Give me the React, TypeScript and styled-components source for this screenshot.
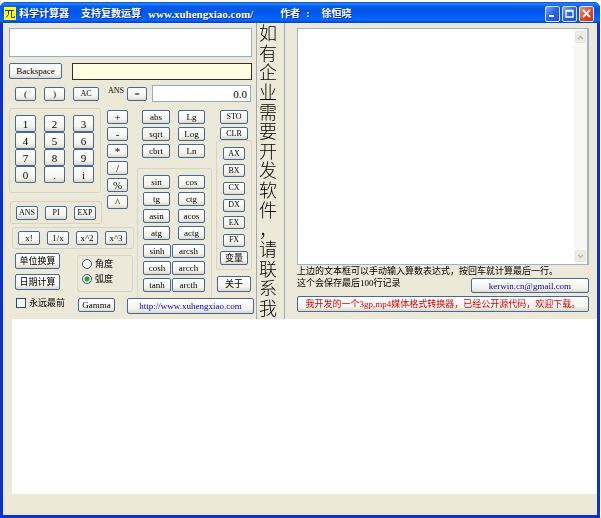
import React from "react";
import styled, { createGlobalStyle, css } from "styled-components";

const GlobalStyle = createGlobalStyle`
  * { box-sizing: border-box; }
  body { margin: 0; background: #fff; }
  button, input, textarea { font: inherit; color: inherit; margin: 0; }
  body, #root { font-family: "Liberation Serif", "Noto Sans CJK SC", serif; font-size: 9px; line-height: 12px; color: #000; }
`;

const Page = styled.div`
  min-height: 100vh;
  display: flex;
  padding: 2px 1px 0 0;
`;

const Window = styled.main`
  flex: 1;
  display: flex;
  flex-direction: column;
  background: #0a3fdc;
  border: 0 solid #0831d9;
  border-width: 0 3px 3px;
  border-radius: 6px 6px 0 0;
`;

const TitleBar = styled.header`
  height: 21px;
  display: flex;
  align-items: center;
  margin: 0 -3px;
  padding: 2px 6px 0 4px;
  border-radius: 6px 6px 0 0;
  color: #fff;
  background: linear-gradient(#0c50cc 0, #2a86fa 2px, #0560ee 4px, #0054e3 9px, #005cf5 13px, #0868ff 18px, #0042c8 21px);
`;

const Title = styled.h1`
  flex: 1;
  margin: 0 0 0 3px;
  display: flex;
  font-size: 10px;
  line-height: 14px;
  font-weight: 700;
  white-space: pre;
  text-shadow: 1px 1px #00309c;
`;

const TitlePart = styled.span<{ $gap?: number; $large?: boolean }>`
  margin-left: ${(p) => p.$gap ?? 0}px;
  font-size: ${(p) => (p.$large ? 11 : 10)}px;
`;

const Captions = styled.div`
  display: flex;
  gap: 2px;
`;

const CaptionButton = styled.button<{ $close?: boolean }>`
  width: 15px;
  height: 16px;
  padding: 0;
  display: grid;
  place-items: center;
  border: 1px solid #d5e2fb;
  border-radius: 2px;
  background: ${(p) =>
    p.$close
      ? "linear-gradient(135deg, #f0907c, #dc4a24 55%, #c83410)"
      : "linear-gradient(135deg, #7ba5f5, #2c62e4 50%, #1e56dc)"};
`;

const Client = styled.div`
  flex: 1;
  display: flex;
  flex-direction: column;
  background: #ece9d8;
  padding-bottom: 21px;
`;

const Panels = styled.div`
  display: flex;
  height: 296px;
`;

const Calculator = styled.section`
  width: 253px;
  flex: none;
  padding: 5px 2px 0 6px;
`;

const Row = styled.div<{ $gap?: number; $top?: number; $indent?: number; $height?: number }>`
  display: flex;
  align-items: ${(p) => (p.$height ? "center" : "flex-start")};
  gap: ${(p) => p.$gap ?? 0}px;
  margin-top: ${(p) => p.$top ?? 0}px;
  padding-left: ${(p) => p.$indent ?? 0}px;
  height: ${(p) => (p.$height ? `${p.$height}px` : "auto")};
`;

const Column = styled.div<{ $gap?: number; $width?: number; $top?: number; $center?: boolean }>`
  display: flex;
  flex-direction: column;
  align-items: ${(p) => (p.$center ? "center" : "flex-start")};
  gap: ${(p) => p.$gap ?? 0}px;
  width: ${(p) => (p.$width ? `${p.$width}px` : "auto")};
  padding-top: ${(p) => p.$top ?? 0}px;
`;

const field = css`
  border: 1px solid #8faccb;
  border-radius: 0;
  background: #fff;
  outline: none;
`;

const Expression = styled.textarea`
  ${field}
  display: block;
  width: 243px;
  height: 29px;
  padding: 2px;
  resize: none;
  font-size: 10px;
`;

const Message = styled.input`
  ${field}
  width: 180px;
  height: 17px;
  border-color: #302f28;
  background: #ffffe1;
`;

const Answer = styled.input`
  ${field}
  width: 99px;
  height: 17px;
  padding: 0 3px;
  text-align: right;
  font-size: 11px;
`;

const AnswerLabel = styled.label`
  width: 14px;
  margin: 0 5px 5px 9px;
  font-size: 8px;
  line-height: 10px;
`;

const Key = styled.button<{ $w?: number; $h?: number; $size?: number; $tone?: string }>`
  width: ${(p) => (p.$w ? `${p.$w}px` : "100%")};
  height: ${(p) => p.$h ?? 14}px;
  flex: none;
  padding: 0;
  display: flex;
  align-items: center;
  justify-content: center;
  white-space: nowrap;
  border: 1px solid #42699a;
  border-radius: 2px;
  background: linear-gradient(#fff, #f5f4ee 70%, #dcd8ca);
  color: ${(p) => p.$tone ?? "#000"};
  font-size: ${(p) => p.$size ?? 9}px;
  line-height: 10px;
`;

const frame = css`
  border: 1px solid #d6d4c2;
  border-radius: 3px;
`;

const NumberPad = styled.div`
  ${frame}
  width: 92px;
  height: 85px;
  padding: 6px 5px;
  display: grid;
  grid-template-columns: repeat(3, 21px);
  grid-auto-rows: 17px;
  column-gap: 8px;
`;

const KeyGroup = styled.div<{ $w: number; $h: number }>`
  ${frame}
  width: ${(p) => p.$w}px;
  height: ${(p) => p.$h}px;
  display: flex;
  align-items: center;
  gap: 7px;
  padding-left: 5px;
`;

const FunctionGrid = styled.div`
  display: grid;
  grid-template-columns: 28px 27px;
  gap: 3px 8px;
  padding-left: 5px;
`;

const TrigGroup = styled.div`
  ${frame}
  width: 75px;
  height: 131px;
  margin-top: 10px;
  padding: 6px 5px;
  display: flex;
  flex-direction: column;
  justify-content: space-between;
`;

const PairRow = styled.div<{ $wide?: boolean }>`
  display: flex;
  gap: ${(p) => (p.$wide ? 1 : 8)}px;
`;

const VariableGroup = styled.div`
  ${frame}
  width: 36px;
  height: 130px;
  padding: 6px 0 4px;
  display: flex;
  flex-direction: column;
  align-items: center;
  justify-content: space-between;
`;

const AngleGroup = styled.fieldset`
  ${frame}
  width: 56px;
  height: 37px;
  margin: 0;
  padding: 0 4px;
  display: flex;
  flex-direction: column;
`;

const Choice = styled.label`
  display: flex;
  align-items: center;
  gap: 3px;
  height: 15px;
  white-space: nowrap;
`;

const Radio = styled.input`
  appearance: none;
  width: 10px;
  height: 10px;
  border: 1px solid #285786;
  border-radius: 50%;
  background: #fbfbf8;
  &:checked { background: radial-gradient(circle, #21a121 0 2px, #fbfbf8 3px); }
`;

const Check = styled.input`
  appearance: none;
  width: 10px;
  height: 10px;
  border: 1px solid #1c5180;
  background: #fafaf5;
`;

const Banner = styled.p`
  flex: none;
  width: 29px;
  margin: 0;
  padding: 1px 0 2px 2px;
  border: 0 solid #9cacb5;
  border-width: 0 1px;
  display: flex;
  flex-direction: column;
  justify-content: space-between;
  font-family: "Noto Sans CJK SC", sans-serif;
  font-size: 18px;
  font-weight: 300;
  line-height: 18px;
`;

const BannerCharacter = styled.span<{ $mark: boolean }>`
  width: 18px;
  height: 18px;
  writing-mode: ${(p) => (p.$mark ? "horizontal-tb" : "vertical-rl")};
`;

const History = styled.section`
  flex: 1;
  min-width: 0;
  padding: 5px 8px 0 12px;
  display: flex;
  flex-direction: column;
`;

const HistoryBox = styled.div`
  ${field}
  display: flex;
  height: 237px;
  border-color: #9fb5c4;
  border-right-width: 2px;
`;

const HistoryText = styled.textarea`
  flex: 1;
  min-width: 0;
  border: 0;
  padding: 2px;
  resize: none;
  outline: none;
  background: none;
`;

const ScrollBar = styled.div`
  width: 13px;
  padding: 2px 1px;
  display: flex;
  flex-direction: column;
  justify-content: space-between;
  background: #f8f7f3;
`;

const ScrollButton = styled.button`
  width: 11px;
  height: 12px;
  padding: 0;
  display: grid;
  place-items: center;
  border: 1px solid #e6e5dd;
  border-radius: 2px;
  background: #eeede5;
`;

const Notes = styled.div`
  display: flex;
  justify-content: space-between;
  align-items: flex-end;
  height: 28px;
`;

const NoteLine = styled.p`
  margin: 0;
  white-space: nowrap;
  line-height: 12px;
`;

const NoteText = styled.div`
  width: 172px;
  align-self: flex-start;
`;

const Blank = styled.div`
  flex: 1;
  margin-left: 9px;
  background: #fff;
`;

const functions = ["abs", "Lg", "sqrt", "Log", "cbrt", "Ln"];
const trig = [["sin", "cos"], ["tg", "ctg"], ["asin", "acos"], ["atg", "actg"]];
const hyperbolic = [["sinh", "arcsh"], ["cosh", "arcch"], ["tanh", "arcth"]];

function Chevron({ up }: { up?: boolean }) {
  return (
    <svg width="7" height="5" viewBox="0 0 7 5" aria-hidden="true">
      <path d={up ? "M1 4 3.5 1.5 6 4" : "M1 1 3.5 3.5 6 1"} fill="none" stroke="#bdbcb0" strokeWidth="1.6" />
    </svg>
  );
}

export default function App() {
  return (
    <Page>
      <GlobalStyle />
      <Window>
        <TitleBar>
          <svg width="12" height="13" viewBox="0 0 12 13" aria-hidden="true">
            <path d="M0 0h12v13H0z" fill="#ffff19" />
            <path d="M1 3.5h9M4.5 3.5v4L2 10.5M7.5 3.5v7h3V9" fill="none" stroke="#38380c" />
          </svg>
          <Title>
            <TitlePart>科学计算器</TitlePart>
            <TitlePart $gap={12}>支持复数运算</TitlePart>
            <TitlePart $gap={7} $large>www.xuhengxiao.com/</TitlePart>
            <TitlePart $gap={27}>作者</TitlePart>
            <TitlePart $gap={6}>:</TitlePart>
            <TitlePart $gap={12}>徐恒晓</TitlePart>
          </Title>
          <Captions>
            <CaptionButton aria-label="Minimize">
              <svg width="11" height="11" viewBox="0 0 11 11"><path d="M2 8h5" stroke="#fff" strokeWidth="2" /></svg>
            </CaptionButton>
            <CaptionButton aria-label="Maximize">
              <svg width="11" height="11" viewBox="0 0 11 11"><path d="M2 2.5h7v6.5H2zM2 3h7" fill="none" stroke="#fff" strokeWidth="1.3" /></svg>
            </CaptionButton>
            <CaptionButton $close aria-label="Close">
              <svg width="11" height="11" viewBox="0 0 11 11"><path d="m2 2 7 7M9 2 2 9" stroke="#fff" strokeWidth="1.8" /></svg>
            </CaptionButton>
          </Captions>
        </TitleBar>
        <Client>
          <Panels>
            <Calculator>
              <Expression aria-label="Expression" autoFocus />
              <Row $top={6} $gap={10}>
                <Key $w={53} $h={16}>Backspace</Key>
                <Message aria-label="Message" readOnly />
              </Row>
              <Row $top={5} $indent={6} $height={17}>
                <Row $gap={8}>
                  <Key $w={21}>(</Key>
                  <Key $w={21}>)</Key>
                  <Key $w={26} $size={8}>AC</Key>
                </Row>
                <AnswerLabel htmlFor="answer">ANS</AnswerLabel>
                <Row $gap={5} $height={17}>
                  <Key $w={20}>=</Key>
                  <Answer id="answer" defaultValue="0.0" />
                </Row>
              </Row>
              <Row $top={6}>
                <Column $width={128}>
                  <Row $gap={5}>
                    <Column $gap={8}>
                      <NumberPad>
                        {["1", "2", "3", "4", "5", "6", "7", "8", "9", "0", ".", "i"].map((k) => (
                          <Key key={k} $h={17} $size={11}>{k}</Key>
                        ))}
                      </NumberPad>
                      <Row $indent={1}>
                        <KeyGroup $w={92} $h={23}>
                          {["ANS", "PI", "EXP"].map((k) => <Key key={k} $w={22} $size={8}>{k}</Key>)}
                        </KeyGroup>
                      </Row>
                    </Column>
                    <Column $gap={3} $top={2}>
                      {["+", "-", "*", "/", "%", "^"].map((k) => <Key key={k} $w={21} $size={11}>{k}</Key>)}
                    </Column>
                  </Row>
                  <Row $top={3} $indent={3}>
                    <KeyGroup $w={122} $h={22}>
                      {["x!", "1/x", "x^2", "x^3"].map((k) => <Key key={k} $w={22}>{k}</Key>)}
                    </KeyGroup>
                  </Row>
                  <Row $top={4} $indent={6} $gap={17}>
                    <Column $gap={5}>
                      <Key $w={45} $h={16}>单位换算</Key>
                      <Key $w={45} $h={16}>日期计算</Key>
                    </Column>
                    <Column $top={2}>
                      <AngleGroup aria-label="Angle unit">
                        <Choice><Radio type="radio" name="angle" />角度</Choice>
                        <Choice><Radio type="radio" name="angle" defaultChecked />弧度</Choice>
                      </AngleGroup>
                    </Column>
                  </Row>
                </Column>
                <Column $width={79} $top={2}>
                  <FunctionGrid>
                    {functions.map((k) => <Key key={k}>{k}</Key>)}
                  </FunctionGrid>
                  <TrigGroup>
                    {trig.map(([a, b]) => (
                      <PairRow key={a}><Key $w={27}>{a}</Key><Key $w={27}>{b}</Key></PairRow>
                    ))}
                    {hyperbolic.map(([a, b]) => (
                      <PairRow key={a} $wide><Key $w={28}>{a}</Key><Key $w={33}>{b}</Key></PairRow>
                    ))}
                  </TrigGroup>
                </Column>
                <Column $width={36} $top={2} $center>
                  <Column $gap={3}>
                    <Key $w={28} $size={8}>STO</Key>
                    <Key $w={28} $h={13} $size={8}>CLR</Key>
                  </Column>
                  <VariableGroup>
                    {["AX", "BX", "CX", "DX", "EX", "FX"].map((k) => <Key key={k} $w={22} $h={13} $size={8}>{k}</Key>)}
                    <Key $w={28}>变量</Key>
                  </VariableGroup>
                  <Row $top={6}><Key $w={34} $h={16}>关于</Key></Row>
                </Column>
              </Row>
              <Row $top={-4} $indent={7}>
                <Choice><Check type="checkbox" />永远最前</Choice>
                <Row $top={3} $indent={13} $gap={12}>
                  <Key $w={37}>Gamma</Key>
                  <Key $w={127} $h={16} $tone="#0000e0">http://www.xuhengxiao.com</Key>
                </Row>
              </Row>
            </Calculator>
            <Banner>
              {Array.from("如有企业需要开发软件，请联系我").map((c) => (
                <BannerCharacter key={c} $mark={c === "，"}>{c}</BannerCharacter>
              ))}
            </Banner>
            <History>
              <HistoryBox>
                <HistoryText aria-label="History" />
                <ScrollBar>
                  <ScrollButton disabled aria-label="Scroll up"><Chevron up /></ScrollButton>
                  <ScrollButton disabled aria-label="Scroll down"><Chevron /></ScrollButton>
                </ScrollBar>
              </HistoryBox>
              <Notes>
                <NoteText>
                  <NoteLine>上边的文本框可以手动输入算数表达式，按回车就计算最后一行。</NoteLine>
                  <NoteLine>这个会保存最后100行记录</NoteLine>
                </NoteText>
                <Key $w={118} $h={15} $tone="#0000c8">kerwin.cn@gmail.com</Key>
              </Notes>
              <Row $top={3}>
                <Key $h={16} $tone="#d80000">我开发的一个3gp,mp4媒体格式转换器，已经公开源代码，欢迎下载。</Key>
              </Row>
            </History>
          </Panels>
          <Blank />
        </Client>
      </Window>
    </Page>
  );
}
